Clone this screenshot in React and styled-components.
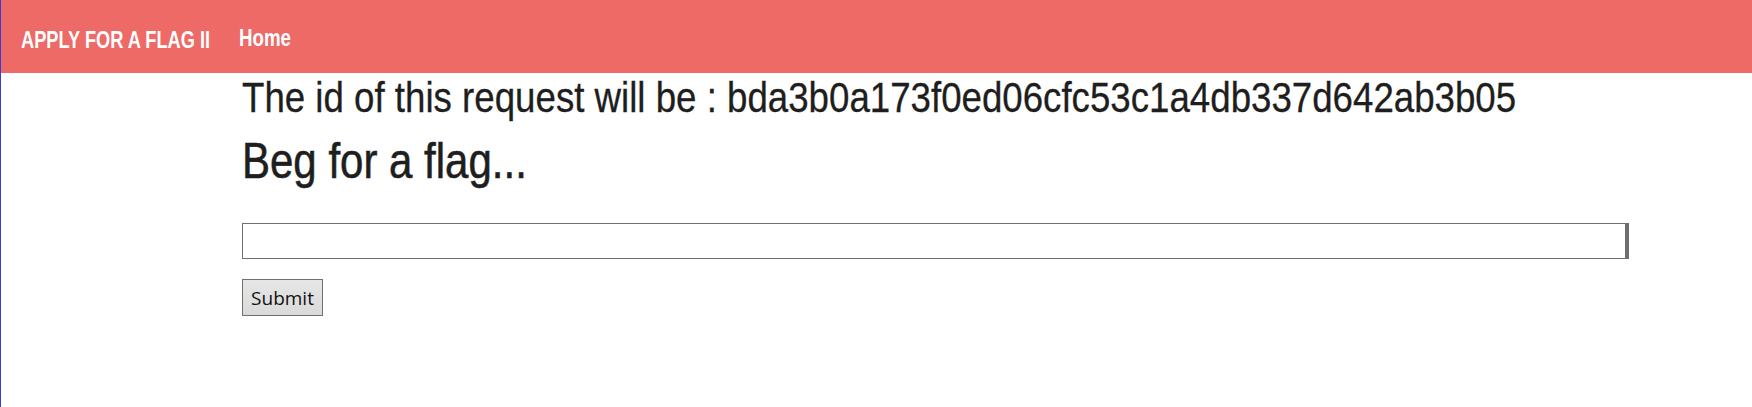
import React from "react";
import styled, { createGlobalStyle } from "styled-components";

const Global = createGlobalStyle`
  html, body { margin: 0; padding: 0; background: #fff; }
  body { font-family: "Liberation Sans", Arial, sans-serif; }
`;

const Page = styled.div`
  min-height: 407px;
  border-left: 1px solid #3a3ad4;
  box-sizing: border-box;
`;

const Nav = styled.nav`
  height: 73px;
  background: #ed6a66;
  display: flex;
  align-items: flex-start;
  padding-left: 20px;
  gap: 31px;
`;

/* The original typeface is a tall condensed gothic; Liberation Sans is squeezed horizontally to match it */
const Squeeze = styled.span`
  display: inline-block;
  white-space: nowrap;
  transform: scaleX(${(p) => p.$sx});
  transform-origin: 0 50%;
`;

const NavLink = styled.a`
  display: block;
  width: ${(p) => p.$w}px;
  color: #fff;
  font-size: 24px;
  line-height: 28px;
  font-weight: 700;
  text-decoration: none;
  margin-top: ${(p) => p.$top}px;
  white-space: nowrap;
`;

const Container = styled.main`
  margin-left: 241px;
  width: 1387px;
`;

const IdLine = styled.h3`
  margin: 0;
  padding-top: 1px;
  font-size: 42px;
  line-height: 48px;
  font-weight: 400;
  color: #1e1e1e;
  white-space: nowrap;
  -webkit-text-stroke: 0.3px #1e1e1e;
`;

const Title = styled.h2`
  margin: 11px 0 0;
  font-size: 50px;
  line-height: 56px;
  font-weight: 400;
  color: #1e1e1e;
  white-space: nowrap;
  -webkit-text-stroke: 0.6px #1e1e1e;
`;

const Form = styled.form`
  display: flex;
  flex-direction: column;
  align-items: flex-start;
  margin-top: 34px;
`;

const Input = styled.input`
  box-sizing: border-box;
  width: 1387px;
  height: 36px;
  margin: 0;
  border: 1px solid #707070;
  border-right-width: 4px;
  border-right-color: #6d6d6d;
  background: #fff;
  outline: none;
  padding: 0 4px;
`;

const Button = styled.button`
  margin: 20px 0 0;
  box-sizing: border-box;
  width: 81px;
  height: 37px;
  border: 1px solid #707070;
  background: linear-gradient(#e6e6e6, #dadada);
  font-family: "Open Sans", "Noto Sans", sans-serif;
  font-size: 19px;
  color: #111;
  padding: 0;
`;

export default function App() {
  return (
    <>
      <Global />
      <Page>
        <Nav>
          <NavLink $w={187} $top={26} href="#">
            <Squeeze $sx={0.76}>APPLY FOR A FLAG II</Squeeze>
          </NavLink>
          <NavLink $w={52} $top={24} href="#">
            <Squeeze $sx={0.78}>Home</Squeeze>
          </NavLink>
        </Nav>
        <Container>
          <IdLine>
            <Squeeze $sx={0.873}>The id of this request will be : bda3b0a173f0ed06cfc53c1a4db337d642ab3b05</Squeeze>
          </IdLine>
          <Title>
            <Squeeze $sx={0.84}>Beg for a flag...</Squeeze>
          </Title>
          <Form onSubmit={(e) => e.preventDefault()}>
            <Input type="text" />
            <Button type="submit">Submit</Button>
          </Form>
        </Container>
      </Page>
    </>
  );
}
